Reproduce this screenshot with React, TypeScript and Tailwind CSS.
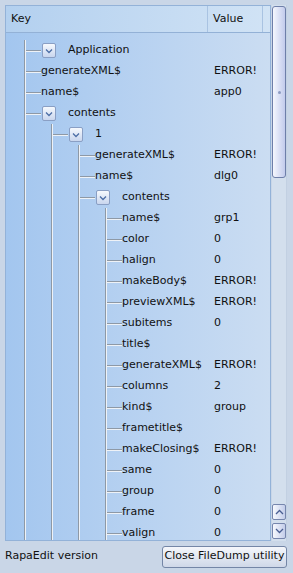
import React from "react";

type Node = { depth: number; label: string; value?: string; box?: boolean };

const rows: Node[] = [
  { depth: 0, label: "Application", box: true },
  { depth: 0, label: "generateXML$", value: "ERROR!" },
  { depth: 0, label: "name$", value: "app0" },
  { depth: 0, label: "contents", box: true },
  { depth: 1, label: "1", box: true },
  { depth: 2, label: "generateXML$", value: "ERROR!" },
  { depth: 2, label: "name$", value: "dlg0" },
  { depth: 2, label: "contents", box: true },
  { depth: 3, label: "name$", value: "grp1" },
  { depth: 3, label: "color", value: "0" },
  { depth: 3, label: "halign", value: "0" },
  { depth: 3, label: "makeBody$", value: "ERROR!" },
  { depth: 3, label: "previewXML$", value: "ERROR!" },
  { depth: 3, label: "subitems", value: "0" },
  { depth: 3, label: "title$" },
  { depth: 3, label: "generateXML$", value: "ERROR!" },
  { depth: 3, label: "columns", value: "2" },
  { depth: 3, label: "kind$", value: "group" },
  { depth: 3, label: "frametitle$" },
  { depth: 3, label: "makeClosing$", value: "ERROR!" },
  { depth: 3, label: "same", value: "0" },
  { depth: 3, label: "group", value: "0" },
  { depth: 3, label: "frame", value: "0" },
  { depth: 3, label: "valign", value: "0" },
];

const font = { fontFamily: '"DejaVu Sans", "Liberation Sans", sans-serif' };

// tree guide lines for one row: every level keeps going past the cut-off
const Guides = ({ depth, box }: { depth: number; box?: boolean }) => {
  const w = depth * 27 + (box ? 36 : 35);
  const levels = Array.from({ length: depth + 1 }, (_, i) => 18 + i * 27);
  const own = 18 + depth * 27;
  return (
    <svg width={w} height={21} className="shrink-0">
      {levels.map((x) => (
        <g key={x}>
          <line x1={x + 0.5} y1={0} x2={x + 0.5} y2={21} stroke="#8e99a6" strokeWidth={1} />
          <line x1={x + 1.5} y1={0} x2={x + 1.5} y2={21} stroke="#eef2f7" strokeWidth={1} />
        </g>
      ))}
      <line x1={own + 2} y1={10.5} x2={w - (box ? 1 : 0)} y2={10.5} stroke="#8e99a6" strokeWidth={1} />
      <line x1={own + 2} y1={11.5} x2={w - (box ? 1 : 0)} y2={11.5} stroke="#eef2f7" strokeWidth={1} />
    </svg>
  );
};

const ExpandBox = () => (
  <div className="w-[14px] h-[15px] shrink-0 rounded-[2px] border border-[#8a9fc4] bg-linear-to-b from-[#f6f9fd] to-[#c9d6ee] flex items-center justify-center">
    <svg width="8" height="6" viewBox="0 0 8 6">
      <path d="M1 1.5 L4 4.5 L7 1.5" fill="none" stroke="#4c6ea6" strokeWidth="1.3" />
    </svg>
  </div>
);

const Row = ({ node }: { node: Node }) => (
  <div className="flex h-[21px] items-center shrink-0">
    <div className="w-[202px] flex items-center overflow-hidden whitespace-nowrap">
      <Guides depth={node.depth} box={node.box} />
      {node.box && <ExpandBox />}
      <span className={node.box ? "ml-[12px]" : ""}>{node.label}</span>
    </div>
    <div className="pl-[6px] whitespace-nowrap">{node.value}</div>
  </div>
);

const ArrowButton = ({ up }: { up?: boolean }) => (
  <div className="w-[14px] h-[16px] rounded-[2px] border border-[#7686ad] bg-linear-to-r from-[#f7f9fd] to-[#c3cdea] flex items-center justify-center">
    <svg width="9" height="6" viewBox="0 0 9 6">
      <path d={up ? "M1 5 L4.5 1.5 L8 5" : "M1 1 L4.5 4.5 L8 1"} fill="none" stroke="#4a5f92" strokeWidth="1.3" />
    </svg>
  </div>
);

export default function App() {
  return (
    <div className="w-[293px] h-[573px] bg-[#c9d6e7] flex flex-col text-[11px] text-[#111]" style={font}>
      <div className="flex h-[536px] mt-[5px] ml-[5px]">
        {/* tree table */}
        <div className="w-[266px] h-full border border-[#93b2d8] flex flex-col overflow-hidden bg-linear-to-r from-[#a3c6ef] to-[#cbddf2]">
          <div className="h-[27px] shrink-0 flex border-b border-[#93b1d6] bg-linear-to-r from-[#b3d0ef] to-[#d1e3f5]">
            <div className="w-[202px] flex items-center pl-[5px] pt-[1px] border-r border-[#a9c3e2]">Key</div>
            <div className="w-[55px] flex items-center pl-[5px] pt-[1px] border-r border-[#a9c3e2]">Value</div>
            <div className="flex-1" />
          </div>
          <div className="flex flex-col pt-[7px] overflow-hidden">
            {rows.map((r, i) => (
              <Row key={i} node={r} />
            ))}
          </div>
        </div>

        {/* scrollbar */}
        <div className="w-[15px] ml-[1px] flex flex-col bg-[#d3dfed] border-r border-[#c2d0e2]">
          <div className="h-[172px] mt-[1px] rounded-[3px] border border-[#6e7fa9] bg-linear-to-r from-[#f5f7fd] to-[#c2cbec] flex items-center justify-center">
            <div className="w-[3px] h-[3px] rounded-full bg-[#8d9bc2]" />
          </div>
          <div className="flex-1" />
          <div className="flex flex-col gap-[3px] mb-[2px]">
            <ArrowButton up />
            <ArrowButton />
          </div>
        </div>
      </div>

      {/* footer */}
      <div className="flex-1 flex items-center justify-between pl-[5px] pr-[6px] pb-[1px]">
        <span>RapaEdit version</span>
        <button className="w-[125px] h-[22px] px-0 rounded-[3px] border border-[#7486a6] bg-linear-to-b from-[#f5f7fb] to-[#cfd8e8] text-[11px] text-[#111] whitespace-nowrap" style={font}>
          Close FileDump utility
        </button>
      </div>
    </div>
  );
}
